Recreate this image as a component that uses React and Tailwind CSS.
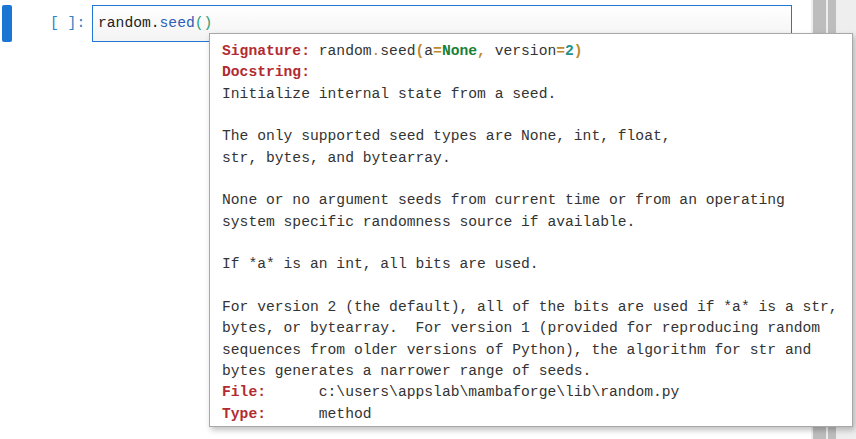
import React from "react";

const mono = { fontFamily: '"Liberation Mono", "DejaVu Sans Mono", monospace' };

function Label({ children }) {
  return <span className="font-bold text-[#b22b31]">{children}</span>;
}

export default function App() {
  const body = [
    "Initialize internal state from a seed.",
    "",
    "The only supported seed types are None, int, float,",
    "str, bytes, and bytearray.",
    "",
    "None or no argument seeds from current time or from an operating",
    "system specific randomness source if available.",
    "",
    "If *a* is an int, all bits are used.",
    "",
    "For version 2 (the default), all of the bits are used if *a* is a str,",
    "bytes, or bytearray.  For version 1 (provided for reproducing random",
    "sequences from older versions of Python), the algorithm for str and",
    "bytes generates a narrower range of seeds.",
  ];
  return (
    <div
      className="relative w-[856px] h-[439px] bg-white flex overflow-hidden text-[14.67px] leading-[21.33px]"
      style={mono}
    >
      <div className="w-[811px] flex items-start pt-[5px]">
        <div className="ml-[2px] w-[10px] h-[37px] rounded-[2px] bg-[#1976d2]" />
        <div className="ml-[38px] w-[42px] h-[37px] flex items-center text-[#307fc1]">
          <span className="whitespace-pre">[ ]:</span>
        </div>
        <div className="w-[700px] h-[37px] border border-[#1e78d4] bg-gradient-to-b from-white to-[#f3f3f3] flex items-center pl-[5px] text-[#222]">
          <span className="whitespace-pre">
            random.<span className="text-[#2d5db5]">seed</span>
            <span className="text-[#2aa07a]">()</span>
          </span>
        </div>
      </div>
      <div className="w-[45px] h-full bg-[#eeeeee] flex pl-[2px] gap-[2px]">
        <div className="w-[13px] h-full bg-[#bdbdbd]" />
        <div className="w-[8px] h-full bg-[#bdbdbd]" />
      </div>

      <div className="absolute left-[209px] top-[33px] w-[644px] h-[394px] bg-white border border-[#a8a8a8] shadow-[2px_3px_6px_rgba(0,0,0,0.25)] pl-[12px] pt-[7px] text-[#333]">
        <div className="whitespace-pre">
          <Label>Signature:</Label> random<span className="text-[#c08a2c]">.</span>seed
          <span className="font-bold text-[#c08a2c]">(</span>a
          <span className="font-bold text-[#c08a2c]">=</span>
          <span className="font-bold text-[#1a7f37]">None</span>
          <span className="font-bold text-[#c08a2c]">,</span> version
          <span className="font-bold text-[#c08a2c]">=</span>
          <span className="font-bold text-[#23918a]">2</span>
          <span className="font-bold text-[#c08a2c]">)</span>
        </div>
        <div className="whitespace-pre">
          <Label>Docstring:</Label>
        </div>
        {body.map((l, i) => (
          <div key={i} className="whitespace-pre h-[21.33px]">
            {l}
          </div>
        ))}
        <div className="whitespace-pre">
          <Label>File:</Label>
          {"      c:\\users\\appslab\\mambaforge\\lib\\random.py"}
        </div>
        <div className="whitespace-pre">
          <Label>Type:</Label>
          {"      method"}
        </div>
      </div>
    </div>
  );
}
